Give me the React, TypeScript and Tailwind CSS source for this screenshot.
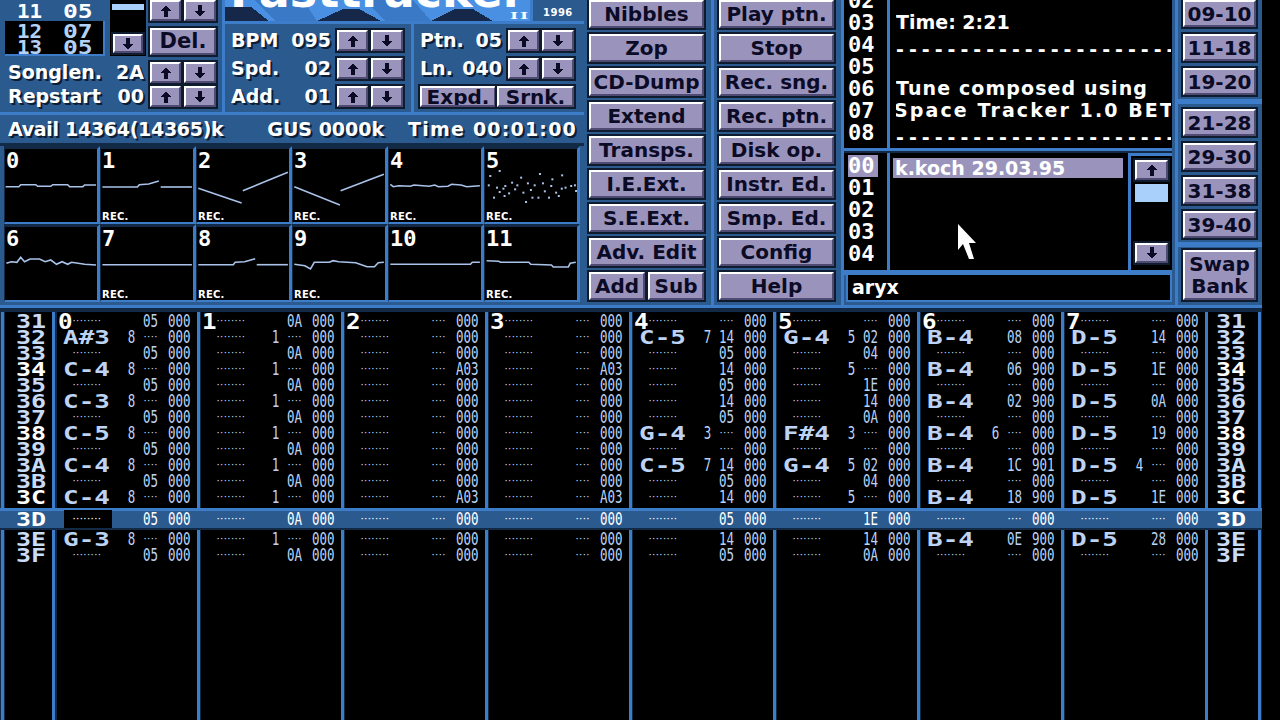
import React from "react";

const BTN = "bg-[#9a94bc] border-2 border-t-white border-l-white border-b-[#4e4a72] border-r-[#4e4a72] shadow-[0_0_0_2px_#0f1b2e] text-[#0b0b26] font-['DejaVu_Sans'] font-bold flex items-center justify-center leading-none whitespace-nowrap overflow-hidden";
const WHITE = "text-white font-['DejaVu_Sans'] font-bold text-[19px] leading-none whitespace-nowrap [text-shadow:2px_2px_0_#0d1d33]";
const WIDE = "font-['DejaVu_Sans_Mono'] font-bold leading-none inline-block whitespace-nowrap";
const BIG = "font-['DejaVu_Sans_Mono'] font-bold text-[22px] leading-none text-white whitespace-nowrap";
const SMALL = "font-['DejaVu_Sans_Mono'] text-[12.5px] leading-none inline-block scale-y-[1.45]";
const INFO = "text-white font-['DejaVu_Sans'] font-bold text-[19px] leading-none whitespace-nowrap";

function Arrow({ dir }: { dir: "up" | "down" }) {
  return (
    <svg width="12" height="12" viewBox="0 0 12 12" shapeRendering="crispEdges" className={dir === "down" ? "rotate-180" : ""}>
      <path d="M6 0 L11 6 L8 6 L8 12 L4 12 L4 6 L1 6 Z" fill="#0b0b26" />
    </svg>
  );
}

function Arrows() {
  return (
    <div className="flex gap-[3px]">
      <div className={BTN + " w-[31px] h-[21px]"}><Arrow dir="up" /></div>
      <div className={BTN + " w-[32px] h-[21px]"}><Arrow dir="down" /></div>
    </div>
  );
}

function Btn({ children, className = "" }: { children: React.ReactNode; className?: string }) {
  return <div className={BTN + " text-[20px] " + className}>{children}</div>;
}

function ValueRow({ label, value, w }: { label: string; value: string; w: string }) {
  return (
    <div className={"flex items-center h-[21px] " + w}>
      <span className={WHITE + " flex justify-between w-full pr-[6px]"}>
        <span>{label}</span>
        <span>{value}</span>
      </span>
    </div>
  );
}

function SongRow({ a, b, h }: { a: string; b: string; h: string }) {
  return (
    <div className={h + " flex items-center gap-[22px]"}>
      <span className={WIDE + " text-[19px] origin-left scale-x-[1.1] w-[24px]"}>{a}</span>
      <span className={WIDE + " text-[19px] origin-left scale-x-[1.3]"}>{b}</span>
    </div>
  );
}

function SongList() {
  return (
    <div className="w-[110px] h-[56px] flex flex-col">
      <div className="h-[21px] pt-px pl-[17px] text-white">
        <SongRow a="11" b="05" h="h-[20px]" />
      </div>
      <div className="ml-[5px] w-[100px] h-[35px] bg-black border-r-2 border-b-2 border-[#3d7cc9] flex flex-col pt-[2px] pl-[12px] text-[#b4d2f5]">
        <SongRow a="12" b="07" h="h-[16px] shrink-0" />
        <SongRow a="13" b="05" h="h-[16px] shrink-0" />
      </div>
    </div>
  );
}

function PosPanel() {
  return (
    <div className="w-[222px] h-[112px] flex flex-col">
      <div className="flex h-[56px]">
        <SongList />
        <div className="w-[36px] h-[56px] bg-black flex flex-col items-center">
          <div className="w-[32px] h-[6px] mt-[4px] bg-[#a9d0fb]" />
          <div className="flex-1" />
          <div className={BTN + " w-[30px] h-[19px] mb-[3px]"}><Arrow dir="down" /></div>
        </div>
        <div className="pl-[4px] flex flex-col">
          <Arrows />
          <Btn className="w-[66px] h-[27px] mt-[7px] text-[21px]">Del.</Btn>
        </div>
      </div>
      <div className="flex flex-col gap-[3px] mt-[6px]">
        <div className="flex">
          <ValueRow label="Songlen." value="2A" w="w-[150px] pl-[8px]" />
          <Arrows />
        </div>
        <div className="flex">
          <ValueRow label="Repstart" value="00" w="w-[150px] pl-[8px]" />
          <Arrows />
        </div>
      </div>
    </div>
  );
}

function Logo() {
  return (
    <div className="h-[21px] flex">
      <div className="relative w-[305px] h-[21px] bg-[#4a90e2] overflow-hidden">
        <svg className="absolute left-0 top-0" width="305" height="21" viewBox="0 0 305 21" shapeRendering="crispEdges">
          <path d="M50 21 L30 0 L78 0 L92 21 Z" fill="#3a79c6" />
          <path d="M160 21 L140 0 L188 0 L206 21 Z" fill="#3a79c6" />
          <path d="M0 21 L0 7 L26 7 L44 21 Z" fill="#16284a" />
          <path d="M92 21 L118 9 L134 9 L156 21 Z" fill="#16284a" />
          <path d="M206 21 L230 9 L248 9 L268 21 Z" fill="#16284a" />
        </svg>
        <div className="relative pl-[5px] -mt-[32px] font-['DejaVu_Sans'] font-bold text-[46px] leading-none text-white whitespace-nowrap">Fasttracker</div>
        <div className="absolute left-[285px] top-[10px] font-['Liberation_Serif'] font-bold text-[11px] leading-none text-white tracking-[1px] origin-left scale-x-[1.9]">II</div>
      </div>
      <div className="w-[3px] bg-[#3d7cc9]" />
      <div className="flex-1 flex items-center pl-[10px] pt-[5px] text-white font-['DejaVu_Sans'] font-bold text-[10px] leading-none tracking-[0.5px]">1996</div>
    </div>
  );
}

function BpmPanel() {
  const rows: [string, string][] = [["BPM", "095"], ["Spd.", "02"], ["Add.", "01"]];
  return (
    <div className="w-[186px] h-[88px] pl-[6px] pt-[6px] flex flex-col gap-[7px]">
      {rows.map(([l, v]) => (
        <div key={l} className="flex items-center">
          <ValueRow label={l} value={v} w="w-[106px]" />
          <Arrows />
        </div>
      ))}
    </div>
  );
}

function PtnPanel() {
  return (
    <div className="flex-1 h-[88px] pl-[6px] pt-[6px] flex flex-col gap-[7px] border-l-[3px] border-[#3d7cc9]">
      <div className="flex items-center">
        <ValueRow label="Ptn." value="05" w="w-[88px]" />
        <Arrows />
      </div>
      <div className="flex items-center">
        <ValueRow label="Ln." value="040" w="w-[88px]" />
        <Arrows />
      </div>
      <div className="flex gap-[1px]">
        <Btn className="w-[76px] h-[21px]">Expd.</Btn>
        <Btn className="w-[77px] h-[21px]">Srnk.</Btn>
      </div>
    </div>
  );
}

type Pt = [number, number];
const waves: { x: number; y: number; lines: Pt[][]; rec: boolean; label: string }[] = [
  { label: "0", rec: false, x: 0, y: 0, lines: [[[15,125],[50,125],[55,119],[95,119],[100,124],[135,124],[140,119],[180,119],[185,125],[220,125],[225,120],[255,120]]] },
  { label: "1", rec: true, x: 1, y: 0, lines: [[[272,126],[365,126],[370,119],[395,117],[422,108]],[[427,126],[510,126]]] },
  { label: "2", rec: true, x: 2, y: 0, lines: [[[527,130],[642,174]],[[645,137],[765,82]]] },
  { label: "3", rec: true, x: 3, y: 0, lines: [[[782,125],[903,180]],[[905,137],[1020,88]]] },
  { label: "4", rec: true, x: 4, y: 0, lines: [[[1037,118],[1045,125],[1060,122],[1090,124],[1100,120],[1140,124],[1155,120],[1165,125],[1190,124],[1200,118],[1225,120],[1240,125],[1275,122]]] },
  { label: "5", rec: true, x: 5, y: 0, lines: [] },
  { label: "6", rec: false, x: 0, y: 1, lines: [[[17,355],[30,350],[45,352],[55,337],[65,350],[80,342],[105,342],[120,350],[135,345],[150,358],[165,350],[180,358],[190,352],[225,358],[255,360]]] },
  { label: "7", rec: true, x: 1, y: 1, lines: [[[272,359],[510,359]]] },
  { label: "8", rec: true, x: 2, y: 1, lines: [[[527,359],[620,359],[625,352],[650,350],[678,341]],[[682,359],[765,359]]] },
  { label: "9", rec: true, x: 3, y: 1, lines: [[[782,358],[810,362],[825,372],[835,352],[875,352],[885,347],[900,350],[945,353],[975,365],[995,365],[1005,353],[1020,352]]] },
  { label: "10", rec: false, x: 4, y: 1, lines: [[[1037,358],[1250,358],[1255,352],[1275,352]]] },
  { label: "11", rec: true, x: 5, y: 1, lines: [[[1293,347],[1325,349],[1330,352],[1405,352],[1410,358],[1465,360],[1470,366],[1510,366],[1515,355],[1530,352]]] },
];
const specks: Pt[] = [[1300,90],[1325,75],[1382,95],[1432,84],[1491,88],[1465,100],[1296,118],[1318,125],[1340,120],[1358,110],[1372,118],[1400,112],[1418,118],[1440,112],[1462,120],[1490,128],[1515,120],[1525,118],[1310,155],[1338,150],[1395,168],[1412,155],[1428,155],[1456,155],[1482,150],[1335,128],[1366,130],[1408,132],[1445,136],[1475,140],[1500,125],[1528,135],[1325,138],[1350,142],[1388,140]];

function Scope({ s }: { s: (typeof waves)[number] }) {
  const ox = 4 + s.x * 96;
  const oy = s.y === 0 ? 146 : 224;
  const conv = ([zx, zy]: Pt): [number, number] => [zx / 2.657 - ox, zy / 3 + 145 - oy];
  return (
    <div className="relative w-[96px] h-[78px] bg-black border-l border-t-[3px] border-[#132a47] border-r-[3px] border-r-[#3d7cc9] border-b-2 border-b-[#3d7cc9]">
      <svg className="absolute -left-px -top-[3px]" width="96" height="78" viewBox="0 0 96 78">
        {s.lines.map((l, i) => (
          <polyline key={i} points={l.map((p) => conv(p).map((n) => n.toFixed(1)).join(",")).join(" ")} fill="none" stroke="#a9c3ea" strokeWidth="1.6" />
        ))}
        {s.label === "5" && specks.map((p, i) => {
          const [x, y] = conv(p);
          return <rect key={i} x={x} y={y} width="2" height="2" fill="#a9c3ea" />;
        })}
      </svg>
      <div className={BIG + " relative pl-[1px] pt-[1px]"}>{s.label}</div>
      {s.rec && <div className="absolute left-px bottom-0 text-white font-['DejaVu_Sans'] font-bold text-[10px] leading-none tracking-[0.2px]">REC.</div>}
    </div>
  );
}

function LeftSection() {
  return (
    <div className="w-[584px] flex flex-col">
      <div className="flex h-[112px]">
        <PosPanel />
        <div className="w-[3px] bg-[#3d7cc9]" />
        <div className="flex-1 flex flex-col">
          <Logo />
          <div className="h-[3px] bg-[#3d7cc9]" />
          <div className="flex">
            <BpmPanel />
            <PtnPanel />
          </div>
        </div>
      </div>
      <div className="h-[3px] bg-[#3d7cc9]" />
      <div className={WHITE + " h-[28px] flex items-center pl-[8px] pr-[7px] justify-between"}>
        <span className="tracking-[-0.3px]">Avail 14364(14365)k</span>
        <span className="ml-[20px]">GUS 0000k</span>
        <span className="tracking-[1.2px]">Time 00:01:00</span>
      </div>
      <div className="h-[3px] bg-[#132a47] " />
      <div className="ml-[4px] w-[576px] grid grid-cols-[repeat(6,96px)]">
        {waves.map((s) => <Scope key={s.label} s={s} />)}
      </div>
    </div>
  );
}

function ButtonCol({ names, extra }: { names: string[]; extra?: React.ReactNode }) {
  return (
    <div className="w-[130px] pl-[5px] flex flex-col gap-[6px] border-r-[3px] border-[#3d7cc9]">
      {names.map((n) => (
        <Btn key={n} className="w-[115px] h-[28px] shrink-0">{n}</Btn>
      ))}
      {extra}
    </div>
  );
}

function Lines() {
  const nums = ["02", "03", "04", "05", "06", "07", "08"];
  const dash = "-".repeat(24);
  const text: [string, string][] = [
    ["", ""],
    ["Time: 2:21", ""],
    [dash, "tracking-[5px] pt-[10px]"],
    ["", ""],
    ["Tune composed using", "tracking-[1.1px]"],
    ["Space Tracker 1.0 BETA", "tracking-[2.1px] -ml-[2px]"],
    [dash, "tracking-[5px] pt-[10px]"],
  ];
  return (
    <div className="h-[148px] flex bg-black overflow-hidden">
      <div className="w-[43px] -mt-[10px] pl-[4px]">
        {nums.map((n) => <div key={n} className={BIG + " h-[22px] flex items-center"}>{n}</div>)}
      </div>
      <div className="w-[3px] bg-[#3d7cc9]" />
      <div className="flex-1 min-w-0 -mt-[11px] ml-[6px] mr-px overflow-hidden">
        {text.map(([t, c], i) => (
          <div key={i} className={INFO + " h-[22px] flex items-center " + c}>{t}</div>
        ))}
      </div>
    </div>
  );
}

function Instruments() {
  return (
    <div className="h-[117px] flex bg-black">
      <div className="w-[43px] pl-[4px] pt-[2px]">
        {["00", "01", "02", "03", "04"].map((n, i) => (
          <div key={n} className={BIG + " h-[22px] flex items-center " + (i === 0 ? "w-[30px] bg-[#9a94bc]" : "")}>{n}</div>
        ))}
      </div>
      <div className="w-[3px] bg-[#3d7cc9]" />
      <div className="w-[238px] pl-[3px] pt-[5px]">
        <div className={INFO + " w-[230px] h-[20px] bg-[#9a94bc] flex items-center pl-[2px]"}>k.koch 29.03.95</div>
      </div>
      <div className="flex-1 border-l-[3px] border-t-[3px] border-[#3d7cc9] flex flex-col items-center pt-[4px] bg-black">
        <div className={BTN + " w-[33px] h-[20px]"}><Arrow dir="up" /></div>
        <div className="w-[33px] h-[18px] mt-[4px] bg-[#a9d0fb]" />
        <div className="flex-1" />
        <div className={BTN + " w-[33px] h-[20px] mb-[7px]"}><Arrow dir="down" /></div>
      </div>
    </div>
  );
}

function InfoSection() {
  return (
    <div className="w-[328px] h-[305px] flex flex-col">
      <Lines />
      <div className="h-[5px] bg-[#3d7cc9] border-b-2 border-[#132a47]" />
      <Instruments />
      <div className="h-[5px] bg-[#3d7cc9]" />
      <div className={INFO + " ml-[2px] w-[326px] h-[27px] bg-black border-b-2 border-l-2 border-r-2 border-[#3d7cc9] flex items-center pl-[4px]"}>aryx</div>
    </div>
  );
}

function BankSection() {
  const b = "w-[73px] h-[27px] shrink-0";
  return (
    <div className="flex-1 ml-[3px] border-l-[3px] border-[#3d7cc9] flex flex-col pl-[5px]">
      <Btn className={b}>09-10</Btn>
      <Btn className={b + " mt-[7px]"}>11-18</Btn>
      <Btn className={b + " mt-[7px]"}>19-20</Btn>
      <div className="h-[5px] shrink-0 -ml-[5px] mt-[4px] bg-[#3d7cc9]" />
      <Btn className={b + " mt-[5px]"}>21-28</Btn>
      <Btn className={b + " mt-[7px]"}>29-30</Btn>
      <Btn className={b + " mt-[7px]"}>31-38</Btn>
      <Btn className={b + " mt-[7px]"}>39-40</Btn>
      <div className="h-[5px] shrink-0 -ml-[5px] mt-[4px] bg-[#3d7cc9]" />
      <Btn className="w-[73px] h-[50px] shrink-0 mt-[3px] flex-col">
        <span>Swap</span>
        <span className="mt-[2px]">Bank</span>
      </Btn>
    </div>
  );
}

type Cell = { note?: string; inst?: string; vol?: string; fx?: string };

const R = ["31","32","33","34","35","36","37","38","39","3A","3B","3C","3D","3E","3F"];

function ch0(): Cell[] {
  const notes: Record<string, string> = { "32": "A#3", "34": "C-4", "36": "C-3", "38": "C-5", "3A": "C-4", "3C": "C-4", "3E": "G-3" };
  return R.map((r, i) => (i % 2 ? { note: notes[r], inst: "8" } : { vol: "05" }));
}
function ch1(): Cell[] {
  return R.map((_, i) => (i % 2 ? { inst: "1" } : { vol: "0A" }));
}
function ch2(): Cell[] {
  return R.map((r) => (r === "34" || r === "3C" ? { fx: "A03" } : {}));
}
const ch4: Cell[] = [{}, { note: "C-5", inst: "7", vol: "14" }, { vol: "05" }, { vol: "14" }, { vol: "05" }, { vol: "14" }, { vol: "05" }, { note: "G-4", inst: "3" }, {}, { note: "C-5", inst: "7", vol: "14" }, { vol: "05" }, { vol: "14" }, { vol: "05" }, { vol: "14" }, { vol: "05" }];
const ch5: Cell[] = [{}, { note: "G-4", inst: "5", vol: "02" }, { vol: "04" }, { inst: "5" }, { vol: "1E" }, { vol: "14" }, { vol: "0A" }, { note: "F#4", inst: "3" }, {}, { note: "G-4", inst: "5", vol: "02" }, { vol: "04" }, { inst: "5" }, { vol: "1E" }, { vol: "14" }, { vol: "0A" }];
const ch6: Cell[] = [{}, { note: "B-4", vol: "08" }, {}, { note: "B-4", vol: "06", fx: "900" }, {}, { note: "B-4", vol: "02", fx: "900" }, {}, { note: "B-4", inst: "6" }, {}, { note: "B-4", vol: "1C", fx: "901" }, {}, { note: "B-4", vol: "18", fx: "900" }, {}, { note: "B-4", vol: "0E", fx: "900" }, {}];
const ch7: Cell[] = [{}, { note: "D-5", vol: "14" }, {}, { note: "D-5", vol: "1E" }, {}, { note: "D-5", vol: "0A" }, {}, { note: "D-5", vol: "19" }, {}, { note: "D-5", inst: "4" }, {}, { note: "D-5", vol: "1E" }, {}, { note: "D-5", vol: "28" }, {}];
const channels: Cell[][] = [ch0(), ch1(), ch2(), ch2(), ch4, ch5, ch6, ch7];

function Dots({ n }: { n: number }) {
  return <span className="font-['DejaVu_Sans_Mono'] font-bold text-[7px] tracking-[-0.6px] leading-none whitespace-nowrap">{"·".repeat(n)}</span>;
}

function PatRow({ c, bar, cursor }: { c: Cell; bar?: boolean; cursor?: boolean }) {
  const col = bar ? "text-white" : "text-[#bcd3f5]";
  return (
    <div className={"flex items-center h-[16px] " + col}>
      <div className={"w-[67px] h-[16px] flex items-center " + (c.note ? "pl-[6px]" : "pl-[15px]")}>
        {cursor ? (
          <div className="-ml-[8px] w-[48px] h-[18px] shrink-0 bg-black flex items-center pl-[8px]"><Dots n={8} /></div>
        ) : c.note ? (
          <span className={WIDE + " text-[20px] origin-left scale-x-[1.3]"}>{c.note}</span>
        ) : (
          <Dots n={8} />
        )}
      </div>
      <div className="w-[15px] h-[16px] flex items-center justify-center"><span className={SMALL}>{c.inst ?? ""}</span></div>
      <div className="w-[29px] h-[16px] pl-[4px] flex items-center">
        {c.vol ? <span className={SMALL}>{c.vol}</span> : <Dots n={4} />}
      </div>
      <span className={SMALL}>{c.fx ?? "000"}</span>
    </div>
  );
}

function NumCol({ from, to, pad, bar }: { from: number; to: number; pad: string; bar?: boolean }) {
  return (
    <div className={"w-full h-full flex flex-col items-center " + (bar ? "" : "pt-px bg-black ") + pad}>
      {R.slice(from, to).map((r, i) => (
        <div key={r} className="h-[16px] flex items-center">
          <span className={WIDE + " text-[20px] scale-x-[1.25] " + (bar || (from + i) % 4 === 3 ? "text-white" : "text-[#c9dcf7]")}>{r}</span>
        </div>
      ))}
    </div>
  );
}

function Band({ from, to, bar, labels, className = "" }: { from: number; to: number; bar?: boolean; labels?: boolean; className?: string }) {
  const line = bar ? "border-transparent" : "border-[#3d7cc9]";
  return (
    <div className={"flex " + className}>
      <div className={"ml-px pl-px border-l-[3px] " + line}>
        <div className={"w-[50px] h-full border-r-[3px] " + line}>
          <NumCol from={from} to={to} pad="pl-[5px]" bar={bar} />
        </div>
      </div>
      <div className="w-[2px]" />
      {channels.map((ch, i) => (
        <div key={i} className={(i === 7 ? "w-[143px]" : "w-[143px] mr-px") + " relative h-full border-r-[3px] " + line + (bar ? "" : " pt-px bg-black")}>
          {labels && <div className={BIG + " absolute left-px -top-[1px] z-10 scale-x-[1.1] origin-left"}>{i}</div>}
          {ch.slice(from, to).map((c, j) => (
            <PatRow key={j} c={c} bar={bar} cursor={bar && i === 0} />
          ))}
        </div>
      ))}
      <div className={"w-[53px] h-full border-r-[3px] " + line}>
        <NumCol from={from} to={to} pad="pr-[4px]" bar={bar} />
      </div>
    </div>
  );
}

function Pattern() {
  return (
    <div className="w-[1262px] h-[415px] bg-[#132a47] flex flex-col">
      <div className="h-[3px] bg-[#3d7cc9] shrink-0" />
      <div className="h-[4px] shrink-0" />
      <Band from={0} to={12} labels className="h-[196px] shrink-0" />
      <div className="h-[3px] bg-[#3d7cc9] shrink-0" />
      <div className="h-[19px] shrink-0 bg-[#2b5a8f] border-b-2 border-[#132a47]">
        <Band from={12} to={13} bar className="h-[17px]" />
      </div>
      <Band from={13} to={15} className="flex-1 min-h-0" />
    </div>
  );
}

export default function App() {
  return (
    <div className="relative w-[1280px] h-[720px] bg-black overflow-hidden">
      <div className="w-[1262px] h-[305px] bg-[#2b5a8f] flex overflow-hidden">
        <LeftSection />
        <ButtonCol names={["Nibbles", "Zop", "CD-Dump", "Extend", "Transps.", "I.E.Ext.", "S.E.Ext.", "Adv. Edit"]} extra={
          <div className="flex gap-[3px]">
            <Btn className="w-[56px] h-[28px]">Add</Btn>
            <Btn className="w-[56px] h-[28px]">Sub</Btn>
          </div>
        } />
        <ButtonCol names={["Play ptn.", "Stop", "Rec. sng.", "Rec. ptn.", "Disk op.", "Instr. Ed.", "Smp. Ed.", "Config", "Help"]} />
        <InfoSection />
        <BankSection />
      </div>
      <Pattern />
      <svg className="absolute left-[958px] top-[224px]" width="20" height="36" viewBox="0 0 20 36">
        <path d="M0 0 L0 26 L5 20 L11 35 L16 35 L11 19 L18 19 Z" fill="#fff" />
      </svg>
    </div>
  );
}
